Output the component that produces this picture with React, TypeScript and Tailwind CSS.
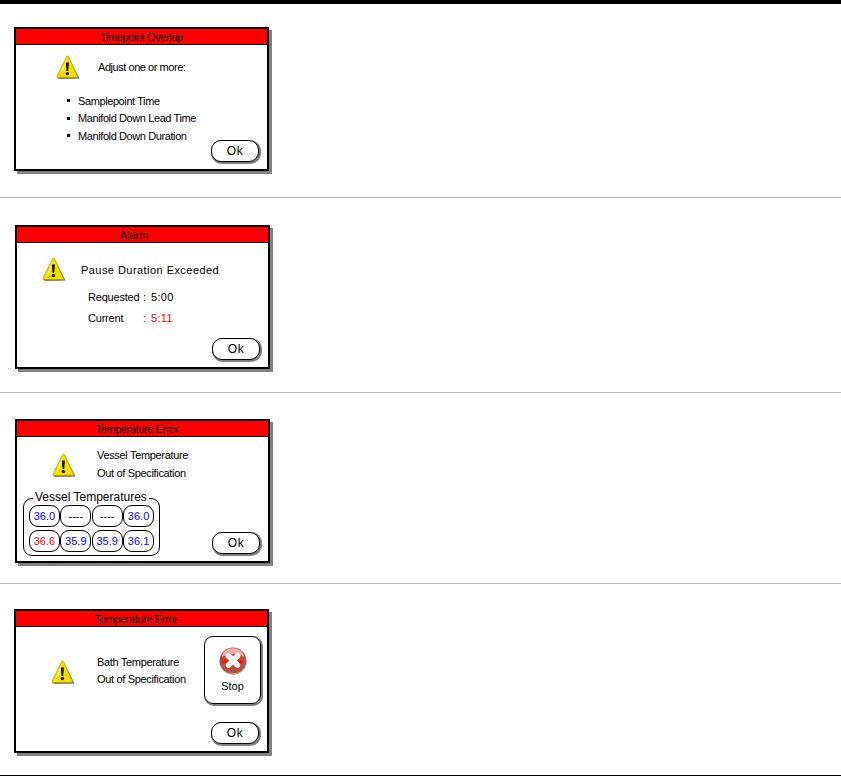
import React from "react";

function Warn() {
  return (
    <svg width="24" height="25" viewBox="0 0 24 25" className="block shrink-0">
      <path d="M12.5 2 L23.5 23.5 L3 24 Z" fill="#5a5a8c" />
      <path d="M11 1 L12.5 1.5 L21.5 21.5 L21 23 L1.5 23 L1 21.5 Z" fill="#f4e000" stroke="#b8a400" strokeWidth="0.8" />
      <path d="M11 3 L5 18 L8 14 Z" fill="#fffba0" />
      <path d="M1.5 22 L21.5 22 L21 23.2 L1.5 23.2 Z" fill="#b09a10" />
      <path d="M9.8 7.5 L13 7.5 L12.2 16 L10.6 16 Z" fill="#111" />
      <circle cx="11.4" cy="18.6" r="1.7" fill="#111" />
    </svg>
  );
}

function StopIcon() {
  return (
    <svg width="28" height="28" viewBox="0 0 28 28" className="block">
      <defs>
        <radialGradient id="stopg" cx="0.45" cy="0.4" r="0.65">
          <stop offset="0" stopColor="#e85040" />
          <stop offset="0.6" stopColor="#c0483a" />
          <stop offset="1" stopColor="#a06848" />
        </radialGradient>
      </defs>
      <circle cx="14" cy="14" r="13.5" fill="url(#stopg)" />
      <path d="M3 10 A11 9 0 0 1 25 10 A14 8 0 0 0 3 10 Z" fill="#e8b0a8" />
      <path d="M5 24 A12 10 0 0 0 23 24 A12 7 0 0 1 5 24 Z" fill="#d8a090" />
      <path d="M2 15 L9 12 L9 17 Z" fill="#ff1010" />
      <path d="M26 15 L19 12 L19 17 Z" fill="#ff1010" />
      <path d="M9.5 9 L18.5 18 M18.5 9 L9.5 18" stroke="#ffffff" strokeWidth="5.5" strokeLinecap="round" />
    </svg>
  );
}

function OkButton({ className = "" }: { className?: string }) {
  return (
    <div className={`w-[48px] h-[22px] shrink-0 rounded-[10px] border border-black bg-white shadow-[1px_1px_0_1px_#808080] flex items-center justify-center text-[12px] tracking-[0.7px] ${className}`}>
      Ok
    </div>
  );
}

function Dialog({ title, titleClass = "", children }: { title: string; titleClass?: string; children: React.ReactNode }) {
  return (
    <div className="w-[255px] h-[144px] border-2 border-black bg-white shadow-[3px_3px_0_#808080] flex flex-col">
      <div className={`h-[14px] pt-[1px] shrink-0 bg-[#ff0000] border-b border-black box-content flex items-center justify-center text-[11px] leading-none text-black ${titleClass}`}>
        {title}
      </div>
      <div className="flex-1 relative flex min-h-0">{children}</div>
    </div>
  );
}

function Cell({ v, red, plain }: { v: string; red?: boolean; plain?: boolean }) {
  return (
    <div className={`w-[31px] h-[22px] rounded-[9px] border border-black flex items-center justify-center text-[11px] ${plain ? "text-black" : red ? "text-[#ff0000]" : "text-[#0000ff]"}`}>
      {v}
    </div>
  );
}

export default function App() {
  return (
    <div className="w-[841px] h-[776px] bg-white text-black overflow-hidden [font-family:'Liberation_Sans',Arial,sans-serif] text-[11px]">
      <div className="h-[4px] bg-black" />

      <section className="h-[194px] border-b border-[#b4b4b4] pt-[23px] pl-[14px]">
        <Dialog title="Timepoint Overlap" titleClass="tracking-[-0.4px]">
          <div className="flex-1 min-w-0 flex flex-col pl-[40px] pt-[10px]">
            <div className="flex items-center gap-[18px]">
              <Warn />
              <span className="tracking-[-0.45px] whitespace-nowrap">Adjust one or more:</span>
            </div>
            <ul className="mt-[14px] ml-[11px] flex flex-col gap-[4px] tracking-[-0.4px]">
              {["Samplepoint Time", "Manifold Down Lead Time", "Manifold Down Duration"].map((t) => (
                <li key={t} className="flex items-center h-[13.5px] whitespace-nowrap">
                  <span className="w-[3px] h-[3px] bg-black mr-[8px]" />
                  {t}
                </li>
              ))}
            </ul>
          </div>
          <OkButton className="self-end mb-[7px] mr-[8px]" />
        </Dialog>
      </section>

      <section className="h-[195px] border-b border-[#b4b4b4] pt-[27px] pl-[15px]">
        <Dialog title="Alarm" titleClass="pr-[17px]">
          <div className="flex-1 min-w-0 flex flex-col pl-[25px] pt-[14px]">
            <div className="flex items-center gap-[15px]">
              <Warn />
              <span className="mt-[2px] tracking-[0.45px] whitespace-nowrap">Pause Duration Exceeded</span>
            </div>
            <div className="ml-[46px] mt-[9px] grid grid-cols-[55px_8px_auto] gap-y-[8px] leading-[13px]">
              <span className="tracking-[-0.2px]">Requested</span><span>:</span><span className="tracking-[0.3px]">5:00</span>
              <span className="tracking-[-0.2px]">Current</span><span className="text-[#ff0000]">:</span><span className="text-[#ff0000] tracking-[0.3px]">5:11</span>
            </div>
          </div>
          <OkButton className="self-end mb-[7px] mr-[8px]" />
        </Dialog>
      </section>

      <section className="h-[191px] border-b border-[#b4b4b4] pt-[26px] pl-[15px]">
        <Dialog title="Temperature Error" titleClass="pr-[11px] tracking-[-0.4px]">
          <div className="flex-1 min-w-0 flex flex-col">
            <div className="flex pl-[35px] pt-[16px] gap-[21px]">
              <Warn />
              <div className="-mt-[7px] leading-[18px] whitespace-nowrap tracking-[-0.33px]">
                <div>Vessel Temperature</div>
                <div>Out of Specification</div>
              </div>
            </div>
            <div className="relative ml-[6px] mt-[16px] w-[137px] h-[58px] rounded-[9px] border border-black px-[5px] pt-[6px] flex flex-col gap-[3px]">
              <span className="absolute -top-[9px] left-[9px] bg-white px-[2px] text-[12px] leading-[14px] whitespace-nowrap">Vessel Temperatures</span>
              <div className="flex gap-[0.5px]"><Cell v="36.0" /><Cell v="----" plain /><Cell v="----" plain /><Cell v="36.0" /></div>
              <div className="flex gap-[0.5px]"><Cell v="36.6" red /><Cell v="35.9" /><Cell v="35.9" /><Cell v="36.1" /></div>
            </div>
          </div>
          <OkButton className="self-end mb-[7px] mr-[8px]" />
        </Dialog>
      </section>

      <section className="h-[192px] border-b border-black pt-[25px] pl-[14px]">
        <Dialog title="Temperature Error" titleClass="pr-[11px] tracking-[-0.4px]">
          <div className="flex-1 min-w-0 flex items-start pl-[35px] pt-[33px] gap-[22px]">
            <Warn />
            <div className="leading-[17px] -mt-[6px] whitespace-nowrap tracking-[-0.33px]">
              <div>Bath Temperature</div>
              <div>Out of Specification</div>
            </div>
          </div>
          <div className="flex flex-col items-end mr-[6px] pt-[9px] pb-[7px] justify-between">
            <div className="w-[57px] h-[68px] rounded-[9px] border border-black shadow-[1px_1px_0_1px_#808080] flex flex-col items-center pt-[10px]">
              <StopIcon />
              <span className="mt-[3px]">Stop</span>
            </div>
            <OkButton className="mr-[2px]" />
          </div>
        </Dialog>
      </section>
    </div>
  );
}
